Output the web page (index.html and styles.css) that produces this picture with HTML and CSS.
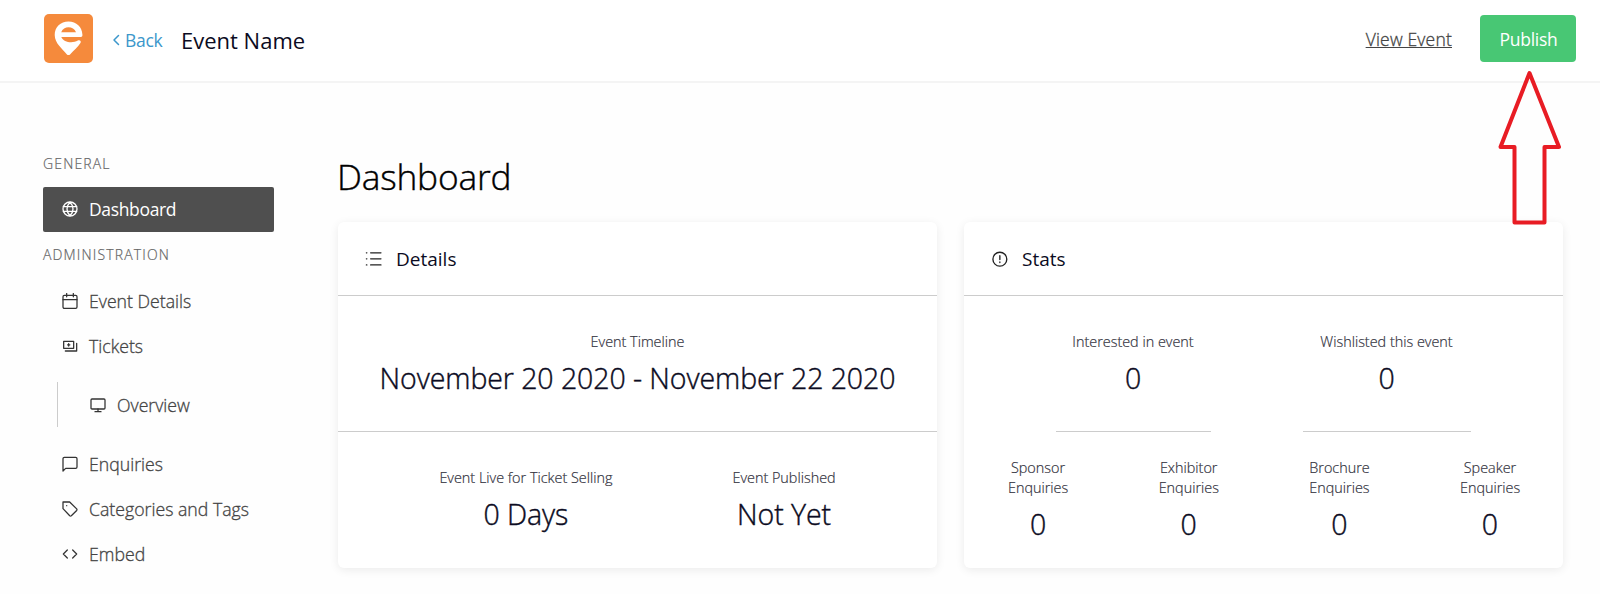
FILE: index.html
```html
<!DOCTYPE html>
<html lang="en">
<head>
    <meta charset="UTF-8">
    <title>Event Name - Dashboard</title>
    <link rel="stylesheet" href="styles.css">
</head>
<body>
<header class="topbar">
    <svg class="logo" viewBox="0 0 49 49">
        <rect width="49" height="49" rx="5" fill="#f58a3c"/>
        <path d="M24.500 7.500C16.500 7.500 10.700 13.200 10.700 21c0 8.500 8 14 12 19.200q1.800 1.800 3.600 0c3-3.700 8-7.200 10.300-11.500.8-2-1.100-3.200-2.800-2.100C29 29.500 19.500 28.800 17.300 23h19.500c1.500 0 1.700-1 1.600-2.500C38 13 32.500 7.500 24.500 7.500z" fill="#fff"/>
        <path d="M17.200 18.300c2.300-6.800 12.300-6.800 14.800 0z" fill="#f58a3c"/>
    </svg>
    <a class="back" href="#">
        <svg class="chevron" viewBox="0 0 8 12"><path d="M6.500 1.500L2 6l4.500 4.500"/></svg>
        <span>Back</span>
    </a>
    <h1 class="event-name">Event Name</h1>
    <a class="view-event" href="#">View Event</a>
    <button class="publish">Publish</button>
</header>

<div class="page">
    <nav class="sidebar">
        <h4 class="group">General</h4>
        <a class="item active" href="#">
            <svg class="icon" viewBox="0 0 24 24"><circle cx="12" cy="12" r="10.500"/><path d="M2 8.500h20M2 15.500h20M12 2c6 6 6 14 0 20M12 2c-6 6-6 14 0 20"/></svg>
            <span>Dashboard</span>
        </a>
        <h4 class="group">Administration</h4>
        <a class="item first" href="#">
            <svg class="icon" viewBox="0 0 24 24"><rect x="1.500" y="3.500" width="21" height="19.500" rx="2"/><path d="M7 .8v5M17 .8v5M1.500 10h21"/></svg>
            <span>Event Details</span>
        </a>
        <a class="item" href="#">
            <svg class="icon" viewBox="0 0 24 24"><path d="M2.500 5h15v10.500h-15zM5 19.500h17V8"/><path d="M10 8.500v3.500M8.300 10.300h3.500"/></svg>
            <span>Tickets</span>
        </a>
        <div class="submenu">
            <a class="item" href="#">
                <svg class="icon" viewBox="0 0 24 24"><rect x="1.500" y="3" width="21" height="15" rx="1.500"/><path d="M12 18v4M7.500 22h9"/></svg>
                <span>Overview</span>
            </a>
        </div>
        <a class="item" href="#">
            <svg class="icon" viewBox="0 0 24 24"><path d="M1.500 22.500V4a2 2 0 0 1 2-2h17a2 2 0 0 1 2 2v12.500a2 2 0 0 1-2 2H5.500z"/></svg>
            <span>Enquiries</span>
        </a>
        <a class="item" href="#">
            <svg class="icon" viewBox="0 0 24 24"><path d="M1.500 1.500h10l10.500 10.300a2 2 0 0 1 0 2.400l-8 8a2 2 0 0 1-2.400 0L1.500 11.500z"/><path d="M7 7h.1"/></svg>
            <span>Categories and Tags</span>
        </a>
        <a class="item" href="#">
            <svg class="icon" viewBox="0 0 24 24"><path d="M8 6l-6 6 6 6M16 6l6 6-6 6"/></svg>
            <span>Embed</span>
        </a>
    </nav>

    <main class="content">
        <h2 class="title">Dashboard</h2>
        <div class="cards">
            <section class="card">
                <div class="card-header">
                    <svg class="icon" viewBox="0 0 24 24"><path d="M8 4h14.500M8 12.500h14.500M8 21h14.500M2 4h.6M2 12.500h.6M2 21h.6"/></svg>
                    <h3>Details</h3>
                </div>
                <div class="row row-timeline">
                    <div class="stat">
                        <div class="label">Event Timeline</div>
                        <div class="value">November 20 2020 - November 22 2020</div>
                    </div>
                </div>
                <div class="row row-status">
                    <div class="stat">
                        <div class="label">Event Live for Ticket Selling</div>
                        <div class="value">0 Days</div>
                    </div>
                    <div class="stat">
                        <div class="label">Event Published</div>
                        <div class="value">Not Yet</div>
                    </div>
                </div>
            </section>

            <section class="card">
                <div class="card-header">
                    <svg class="icon" viewBox="0 0 24 24"><circle cx="12.500" cy="13" r="9.800"/><path d="M12.500 8v5.500M12.500 17v.8"/></svg>
                    <h3>Stats</h3>
                </div>
                <div class="row row-interest">
                    <div class="stat">
                        <div class="label">Interested in event</div>
                        <div class="value">0</div>
                    </div>
                    <div class="stat">
                        <div class="label">Wishlisted this event</div>
                        <div class="value">0</div>
                    </div>
                </div>
                <div class="row row-enquiries">
                    <div class="stat">
                        <div class="label">Sponsor<br>Enquiries</div>
                        <div class="value">0</div>
                    </div>
                    <div class="stat">
                        <div class="label">Exhibitor<br>Enquiries</div>
                        <div class="value">0</div>
                    </div>
                    <div class="stat">
                        <div class="label">Brochure<br>Enquiries</div>
                        <div class="value">0</div>
                    </div>
                    <div class="stat">
                        <div class="label">Speaker<br>Enquiries</div>
                        <div class="value">0</div>
                    </div>
                </div>
            </section>
        </div>
    </main>
</div>

<svg class="arrow" viewBox="0 0 64 156">
    <path d="M31.500 3L61 77H46.500V152.500H16.500V77H2.500z"/>
</svg>
</body>
</html>
```
FILE: styles.css
```css
* {
    box-sizing: border-box;
}
body {
    margin: 0;
    height: 594px;
    overflow: hidden;
    background: #fefefe;
    font-family: "Segoe UI", "Open Sans", "Noto Sans", sans-serif;
    color: #0b0b22;
}
h1, h2, h3, h4 {
    margin: 0;
    font-weight: 400;
}
a {
    color: inherit;
    text-decoration: none;
}
svg {
    flex: none;
    fill: none;
    stroke-linecap: round;
    stroke-linejoin: round;
}
.topbar {
    display: flex;
    align-items: center;
    height: 83px;
    padding: 0 24px 4px 44px;
    background: #fff;
    border-bottom: 2px solid #f4f4f4;
}
.logo {
    width: 49px;
    height: 49px;
}
.back {
    display: flex;
    align-items: center;
    width: 69px;
    margin-left: 19px;
    padding-top: 2px;
    font-size: 17.5px;
    letter-spacing: -0.3px;
    color: #3c97cb;
}
.chevron {
    width: 8px;
    height: 12px;
    margin-right: 5px;
    stroke: #3c97cb;
    stroke-width: 1.5;
}
.event-name {
    font-size: 22px;
    line-height: 28px;
    padding-top: 3px;
}
.view-event {
    margin-left: auto;
    padding-top: 1px;
    font-size: 17.5px;
    font-weight: 300;
    letter-spacing: 0.2px;
    color: #444;
    text-decoration: underline;
    -webkit-text-stroke: 0.3px;
}
.publish {
    width: 96px;
    height: 47px;
    margin-left: 28px;
    padding: 0 0 0 1px;
    border: none;
    border-radius: 4px;
    background: #48c774;
    color: #fff;
    font-family: inherit;
    font-size: 17.5px;
    letter-spacing: -0.3px;
}
.page {
    display: flex;
}
.sidebar {
    width: 231px;
    margin-left: 43px;
    padding-top: 71px;
    color: #444;
}
.group {
    height: 20px;
    font-size: 14px;
    line-height: 20px;
    font-weight: 300;
    letter-spacing: 1.15px;
    text-transform: uppercase;
    color: #666;
    -webkit-text-stroke: 0.2px;
}
.item {
    display: flex;
    align-items: center;
    height: 45.3px;
    padding-left: 19px;
    font-size: 17.7px;
    font-weight: 300;
    -webkit-text-stroke: 0.3px;
}
.item .icon {
    width: 16px;
    height: 16px;
    margin-right: 11px;
    stroke: #333;
    stroke-width: 1.9;
}
.item.active {
    margin: 13px 0 13px;
    padding-bottom: 1px;
    border-radius: 2px;
    background: #4f4f4f;
    color: #fff;
    font-size: 17.5px;
    font-weight: 400;
    letter-spacing: -0.35px;
    -webkit-text-stroke: 0;
}
.item.active .icon {
    stroke: #fff;
    stroke-width: 2;
}
.item.first {
    margin-top: 13px;
}
.submenu {
    margin: 13px 0 14px 14px;
    border-left: 1px solid #ccc;
}
.submenu .item {
    padding-left: 32px;
}
.content {
    margin-left: 64px;
    padding-top: 69px;
}
.title {
    height: 70px;
    margin-left: -1px;
    font-size: 35.3px;
    line-height: 48px;
    font-weight: 300;
    letter-spacing: -0.2px;
    color: #000;
    -webkit-text-stroke: 0.4px;
}
.cards {
    display: grid;
    grid-template-columns: 599px 599px;
    gap: 27px;
}
.card {
    height: 346px;
    border-radius: 6px;
    background: #fff;
    box-shadow: 0 2px 10px rgba(0, 0, 0, 0.08);
}
.card-header {
    display: flex;
    align-items: center;
    height: 74px;
    padding-left: 27px;
    border-bottom: 1px solid #ccc;
}
.card-header .icon {
    width: 17px;
    height: 17px;
    margin-right: 14px;
    stroke: #222;
    stroke-width: 1.9;
}
.card-header h3 {
    font-size: 19px;
    font-weight: 500;
}
.row {
    display: flex;
    text-align: center;
}
.label {
    font-size: 14.4px;
    line-height: 20px;
    font-weight: 300;
    color: #333340;
    -webkit-text-stroke: 0.2px;
}
.value {
    font-size: 28.5px;
    line-height: 40px;
    font-weight: 300;
    letter-spacing: -0.08px;
    margin-top: 6px;
    -webkit-text-stroke: 0.4px;
}
.row-timeline {
    height: 136px;
    justify-content: center;
    padding-top: 36px;
    border-bottom: 1px solid #ccc;
}
.row-status {
    justify-content: center;
    gap: 120px;
    padding-top: 36px;
}
.row-interest {
    justify-content: center;
    gap: 92px;
    padding-right: 1px;
}
.row-interest .stat {
    width: 155px;
    height: 136px;
    padding-top: 36px;
    border-bottom: 1px solid #ccc;
}
.row-interest .stat:last-child {
    width: 168px;
}
.row-enquiries {
    justify-content: space-between;
    padding: 26px 43px 0 44px;
}
.row-enquiries .stat {
    width: 60px;
}
/* callout arrow pointing at the publish button */
.arrow {
    position: absolute;
    left: 1498px;
    top: 70px;
    width: 64px;
    height: 156px;
    stroke: #e81c24;
    stroke-width: 4;
}
```
